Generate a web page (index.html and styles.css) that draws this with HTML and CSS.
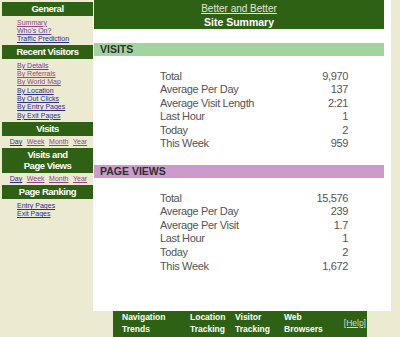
FILE: index.html
```html
<!DOCTYPE html>
<html lang="en">
<head>
    <meta charset="UTF-8">
    <title>Better and Better - Site Summary</title>
    <link rel="stylesheet" href="styles.css">
</head>
<body>
    <div class="page">
        <div class="sidebar">
            <div class="side-head">General</div>
            <ul class="side-links">
                <li><a href="#" class="seen">Summary</a></li>
                <li><a href="#" class="violet">Who's On?</a></li>
                <li><a href="#">Traffic Prediction</a></li>
            </ul>

            <div class="side-head">Recent Visitors</div>
            <ul class="side-links">
                <li><a href="#" class="violet">By Details</a></li>
                <li><a href="#" class="seen">By Referrals</a></li>
                <li><a href="#" class="seen">By World Map</a></li>
                <li><a href="#">By Location</a></li>
                <li><a href="#">By Out Clicks</a></li>
                <li><a href="#">By Entry Pages</a></li>
                <li><a href="#">By Exit Pages</a></li>
            </ul>

            <div class="side-head">Visits</div>
            <div class="periods">
                <a href="#">Day</a>
                <a href="#" class="seen">Week</a>
                <a href="#" class="seen">Month</a>
                <a href="#" class="seen">Year</a>
            </div>

            <div class="side-head double">Visits and<br>Page Views</div>
            <div class="periods">
                <a href="#">Day</a>
                <a href="#" class="seen">Week</a>
                <a href="#" class="seen">Month</a>
                <a href="#" class="seen">Year</a>
            </div>

            <div class="side-head">Page Ranking</div>
            <ul class="side-links ranking">
                <li><a href="#">Entry Pages</a></li>
                <li><a href="#">Exit Pages</a></li>
            </ul>
        </div>

        <div class="main">
            <div class="content">
                <div class="title-bar">
                    <a href="#" class="site-name">Better and Better</a>
                    <div class="page-name">Site Summary</div>
                </div>

                <div class="section-bar visits">VISITS</div>
                <table class="stats">
                    <tr><td>Total</td><td>9,970</td></tr>
                    <tr><td>Average Per Day</td><td>137</td></tr>
                    <tr><td>Average Visit Length</td><td>2:21</td></tr>
                    <tr><td>Last Hour</td><td>1</td></tr>
                    <tr><td>Today</td><td>2</td></tr>
                    <tr><td>This Week</td><td>959</td></tr>
                </table>

                <div class="section-bar pageviews">PAGE VIEWS</div>
                <table class="stats">
                    <tr><td>Total</td><td>15,576</td></tr>
                    <tr><td>Average Per Day</td><td>239</td></tr>
                    <tr><td>Average Per Visit</td><td>1.7</td></tr>
                    <tr><td>Last Hour</td><td>1</td></tr>
                    <tr><td>Today</td><td>2</td></tr>
                    <tr><td>This Week</td><td>1,672</td></tr>
                </table>
            </div>

            <div class="bottom-nav">
                <a href="#">Navigation<br>Trends</a>
                <a href="#">Location<br>Tracking</a>
                <a href="#">Visitor<br>Tracking</a>
                <a href="#">Web<br>Browsers</a>
                <a href="#" class="help">[Help]</a>
            </div>
        </div>
    </div>
</body>
</html>
```

FILE: styles.css
```css
* {
    margin: 0;
    padding: 0;
    box-sizing: border-box;
}

body {
    background: #ecebd2;
    font-family: 'Liberation Sans', Arial, sans-serif;
    height: 337px;
    overflow: hidden;
}

.page {
    display: flex;
    align-items: flex-start;
}

/* left menu */

.sidebar {
    width: 93px;
    flex-shrink: 0;
    padding: 2px 0 0 2px;
}

.side-head {
    background: #2f6115;
    color: #fff;
    font-weight: bold;
    font-size: 9.5px;
    letter-spacing: -0.45px;
    text-align: center;
    line-height: 14px;
}

.side-head.double {
    line-height: 11.5px;
    padding: 1px 0;
}

.side-links {
    list-style: none;
    padding: 2.5px 0 2px 15px;
}

.side-links.ranking {
    padding-top: 3px;
}

.side-links li {
    font-size: 7px;
    line-height: 8.3px;
}

.sidebar a {
    color: #2b2b92;
}

.sidebar a.violet {
    color: #5a3fa4;
}

.sidebar a.seen {
    color: #93447f;
}

.periods {
    display: flex;
    justify-content: center;
    gap: 4.5px;
    font-size: 7px;
    line-height: 9px;
    padding: 1.5px 0 1.5px 2px;
}

/* main column */

.main {
    width: 298px;
    flex-shrink: 0;
}

.content {
    background: #fff;
    height: 311px;
    padding: 0 7px 0 1px;
}

.title-bar {
    background: #2f6115;
    text-align: center;
    line-height: 13.5px;
}

.site-name {
    color: #e4e6d8;
    font-size: 10px;
}

.page-name {
    color: #fff;
    font-weight: bold;
    font-size: 10.5px;
}

.section-bar {
    margin-top: 14px;
    padding-left: 6px;
    font-size: 10.5px;
    font-weight: bold;
    color: #2e2e2e;
    line-height: 12.5px;
}

.section-bar.visits {
    background: #a3d4a0;
}

.section-bar.pageviews {
    background: #cc9acb;
}

.stats {
    margin: 14px 0 0 66px;
    width: 188px;
    border-collapse: collapse;
    font-size: 11px;
    letter-spacing: -0.35px;
    color: #545454;
}

.stats td {
    padding: 0;
    line-height: 13.6px;
}

.stats td:last-child {
    text-align: right;
}

/* footer links */

.bottom-nav {
    margin-left: 20px;
    width: 254px;
    height: 26px;
    background: #2f6115;
    display: grid;
    grid-template-columns: 68px 45px 49px 1fr auto;
    align-items: start;
    padding: 0 1px 0 9px;
}

.bottom-nav a {
    color: #fff;
    font-weight: bold;
    font-size: 8.5px;
    line-height: 12px;
    text-decoration: none;
}

.bottom-nav a.help {
    font-weight: normal;
    color: #dcdcd0;
    text-decoration: underline;
    align-self: center;
    margin-top: -2px;
}
```
